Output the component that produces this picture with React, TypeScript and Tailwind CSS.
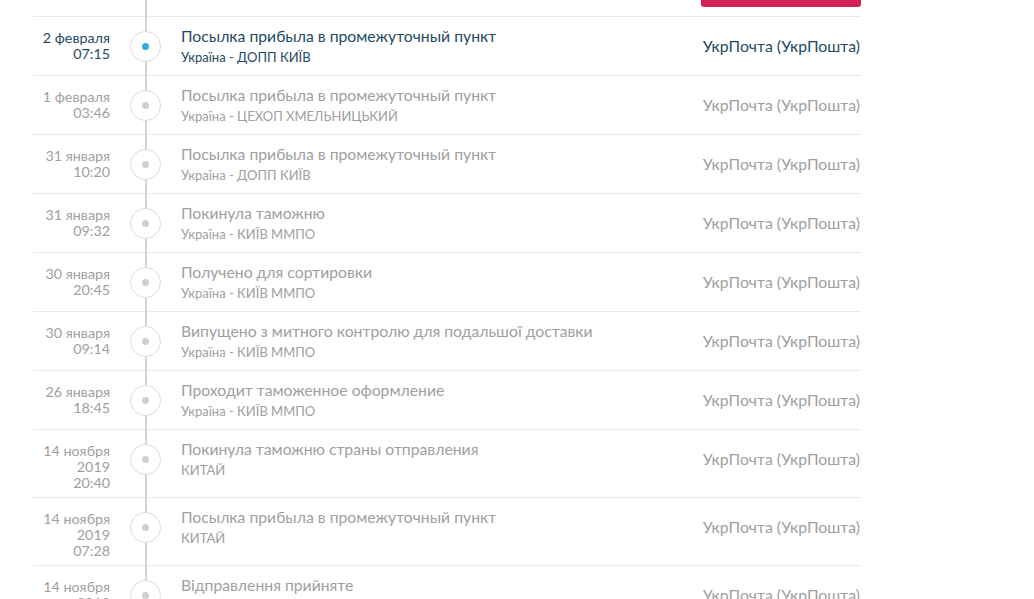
import React from 'react';

interface TrackEvent {
  date: string[];
  title: string;
  place: string;
  carrier: string;
  active?: boolean;
}

const events: TrackEvent[] = [
  { date: ['2 февраля', '07:15'], title: 'Посылка прибыла в промежуточный пункт', place: 'Україна - ДОПП КИЇВ', carrier: 'УкрПочта (УкрПошта)', active: true },
  { date: ['1 февраля', '03:46'], title: 'Посылка прибыла в промежуточный пункт', place: 'Україна - ЦЕХОП ХМЕЛЬНИЦЬКИЙ', carrier: 'УкрПочта (УкрПошта)' },
  { date: ['31 января', '10:20'], title: 'Посылка прибыла в промежуточный пункт', place: 'Україна - ДОПП КИЇВ', carrier: 'УкрПочта (УкрПошта)' },
  { date: ['31 января', '09:32'], title: 'Покинула таможню', place: 'Україна - КИЇВ ММПО', carrier: 'УкрПочта (УкрПошта)' },
  { date: ['30 января', '20:45'], title: 'Получено для сортировки', place: 'Україна - КИЇВ ММПО', carrier: 'УкрПочта (УкрПошта)' },
  { date: ['30 января', '09:14'], title: 'Випущено з митного контролю для подальшої доставки', place: 'Україна - КИЇВ ММПО', carrier: 'УкрПочта (УкрПошта)' },
  { date: ['26 января', '18:45'], title: 'Проходит таможенное оформление', place: 'Україна - КИЇВ ММПО', carrier: 'УкрПочта (УкрПошта)' },
  { date: ['14 ноября', '2019', '20:40'], title: 'Покинула таможню страны отправления', place: 'КИТАЙ', carrier: 'УкрПочта (УкрПошта)' },
  { date: ['14 ноября', '2019', '07:28'], title: 'Посылка прибыла в промежуточный пункт', place: 'КИТАЙ', carrier: 'УкрПочта (УкрПошта)' },
  { date: ['14 ноября', '2019', '05:10'], title: 'Відправлення прийняте', place: 'КИТАЙ', carrier: 'УкрПочта (УкрПошта)' },
];

const Row: React.FC<{ ev: TrackEvent }> = ({ ev }) => {
  const tone = ev.active ? 'text-[#1f4a63]' : 'text-[#a0a0a0]';
  return (
    <div className="flex border-t border-[#e9e9e9] min-h-[59px] pt-[13px] pb-[6px]">
      <div className={`w-[77px] shrink-0 text-right text-[14.3px] leading-[16px] ${tone}`}>
        {ev.date.map((d, i) => (
          <div key={i}>{d}</div>
        ))}
      </div>
      <div className="relative w-[71px] shrink-0 flex justify-center">
        <div className="absolute left-1/2 -translate-x-1/2 -top-[14px] -bottom-[6px] w-[2px] bg-[#d3d3d3]" />
        <div className="relative mt-[1px] w-[31px] h-[31px] rounded-full border border-[#dcdcdc] bg-white flex items-center justify-center">
          <div className={`w-[7px] h-[7px] rounded-full ${ev.active ? 'bg-[#2fa9e0]' : 'bg-[#cfcfcf]'}`} />
        </div>
      </div>
      <div className="flex-1 min-w-0 -mt-[3px]">
        <div className={`text-[15.75px] leading-[18px] ${tone}`}>{ev.title}</div>
        <div className={`mt-[3px] text-[13px] leading-[18px] ${tone}`}>{ev.place}</div>
      </div>
      <div className={`pt-[7px] pr-[1px] text-[15.8px] leading-[18px] ${tone}`}>{ev.carrier}</div>
    </div>
  );
};

export default function App() {
  return (
    <div className="w-[1034px] h-[599px] overflow-hidden bg-white font-['Lato','Open_Sans',sans-serif]">
      <div className="ml-[33px] w-[828px]">
        <div className="flex h-[16px]">
          <div className="w-[77px]" />
          <div className="w-[71px] flex justify-center">
            <div className="w-[2px] h-full bg-[#d3d3d3]" />
          </div>
          <div className="flex-1 flex justify-end">
            <div className="w-[160px] h-[7px] rounded-b-[3px] bg-[#d4225a]" />
          </div>
        </div>
        {events.map((ev, i) => (
          <Row key={i} ev={ev} />
        ))}
      </div>
    </div>
  );
}
